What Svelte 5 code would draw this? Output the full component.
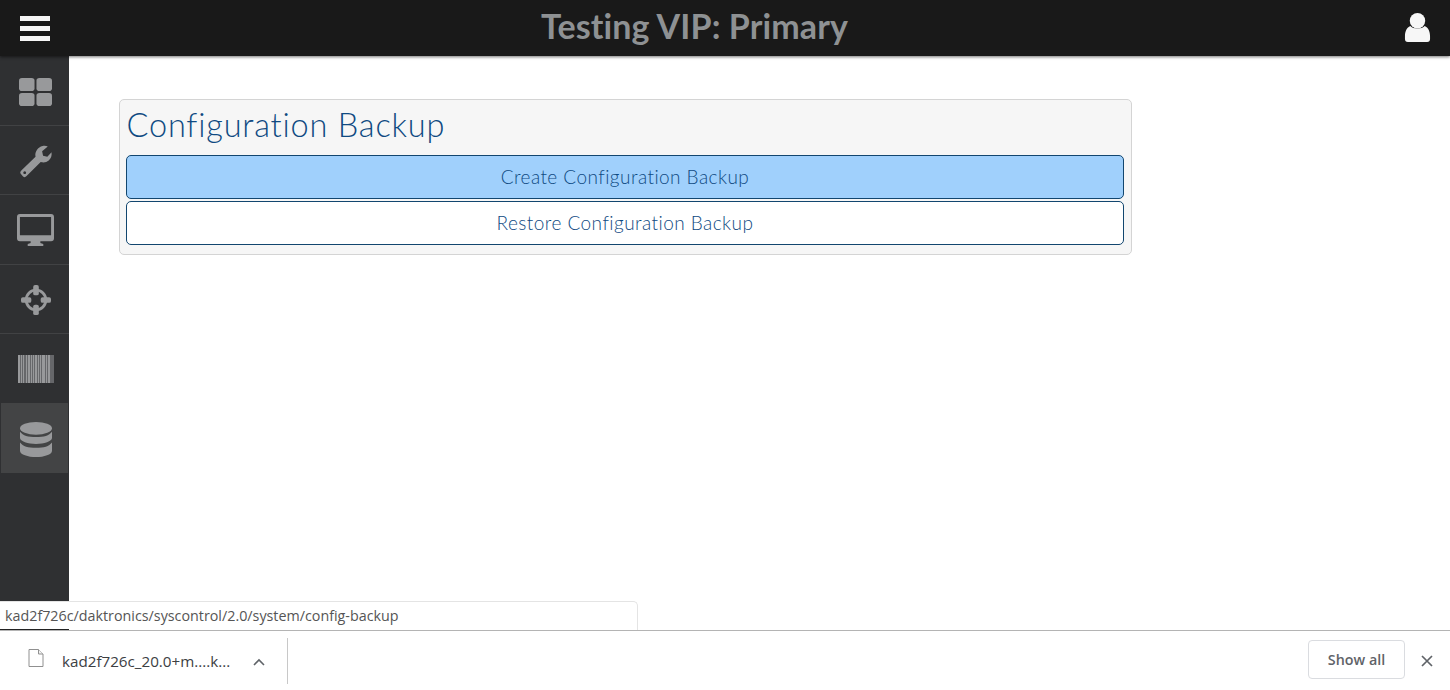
<script lang="ts">
	const navItems = [
		{ id: 'dashboard', active: false },
		{ id: 'tools', active: false },
		{ id: 'display', active: false },
		{ id: 'target', active: false },
		{ id: 'barcode', active: false },
		{ id: 'database', active: true }
	];

	// bar widths for the barcode icon, alternating bar and gap
	const barcode = [2, 1, 1, 1, 1, 2, 1, 1, 2, 1, 1, 1, 1, 1, 2, 1, 1, 1, 1, 1, 3, 1, 1, 1, 2];
	const bars = barcode.reduce((acc, w, i) => {
		const x = barcode.slice(0, i).reduce((a, b) => a + b, 0);
		if (i % 2 === 0) acc.push({ x, w });
		return acc;
	}, [] as { x: number; w: number }[]);
</script>

<div class="page">
	<header class="topbar">
		<button class="topbar__menu" type="button" aria-label="Menu">
			<span></span><span></span><span></span>
		</button>
		<h1 class="topbar__title">Testing VIP: Primary</h1>
		<svg class="topbar__user" viewBox="0 0 28 32" width="27" height="31" aria-hidden="true">
			<circle cx="14" cy="9" r="8" fill="#f7f7f7" />
			<path d="M6.5 14.5 C9 18 19 18 21.5 14.5 C25 16 27 20 27 25 L27 28 C27 30 26 31 24 31 L4 31 C2 31 1 30 1 28 L1 25 C1 20 3 16 6.5 14.5 Z" fill="#f7f7f7" />
		</svg>
	</header>

	<div class="body">
		<nav class="rail">
			{#each navItems as item}
				<button class="rail__item" class:is-active={item.active} type="button" aria-label={item.id}>
					{#if item.id === 'dashboard'}
						<svg viewBox="0 0 34 30" width="33" height="28" preserveAspectRatio="none">
							<rect x="0" y="0" width="16" height="14" rx="3" />
							<rect x="18" y="0" width="16" height="14" rx="3" />
							<rect x="0" y="16" width="16" height="14" rx="3" />
							<rect x="18" y="16" width="16" height="14" rx="3" />
						</svg>
					{:else if item.id === 'tools'}
						<svg viewBox="0 0 34 34" width="32" height="33" preserveAspectRatio="none">
							<path fill-rule="evenodd" d="M24 1 C26 0.6 28 0.8 29.5 1.5 L23.5 6.5 L24.5 11 L29 12 L33.5 7.5 C34 11 33 14 30.5 16 C28 18 25 18.5 22 17.5 L7 32 C5.5 33.5 4.5 33.5 3 32.2 L1 30 C0 28.6 0 27.5 1.4 26.2 L16.5 12 C15.5 7 19 2 24 1 Z M5 27 A1.5 1.5 0 1 0 5.01 27 Z" />
						</svg>
					{:else if item.id === 'display'}
						<svg viewBox="0 0 38 34" width="37" height="33" preserveAspectRatio="none">
							<path fill-rule="evenodd" d="M3 0 H35 C37 0 38 1 38 3 V25 C38 27 37 28 35 28 H24 V30 L27 31 V33 H11 V31 L14 30 V28 H3 C1 28 0 27 0 25 V3 C0 1 1 0 3 0 Z M3 3 V22 H35 V3 Z" />
						</svg>
					{:else if item.id === 'target'}
						<svg viewBox="0 0 32 32" width="30" height="30">
							<circle cx="16" cy="16" r="10.5" fill="none" stroke-width="3" class="rail__ring" />
							<rect x="13" y="0" width="6" height="11" rx="2" />
							<rect x="13" y="21" width="6" height="11" rx="2" />
							<rect x="0" y="13" width="11" height="6" rx="2" />
							<rect x="21" y="13" width="11" height="6" rx="2" />
						</svg>
					{:else if item.id === 'barcode'}
						<svg viewBox="0 0 36 28" width="36" height="28" preserveAspectRatio="none">
							<rect class="rail__barback" x="0" y="0" width="36" height="28" />
							{#each bars as bar}
								<rect x={bar.x} y="0" width={bar.w} height="28" />
							{/each}
						</svg>
					{:else}
						<svg viewBox="0 0 32 36" width="32" height="35" preserveAspectRatio="none">
							<ellipse cx="16" cy="6.5" rx="16" ry="6.5" />
							<path d="M0 10 C3 14 8 15.5 16 15.5 C24 15.5 29 14 32 10 V16.5 C32 20 24 22.5 16 22.5 C8 22.5 0 20 0 16.5 Z" />
							<path d="M0 21 C3 25 8 26.5 16 26.5 C24 26.5 29 25 32 21 V29.5 C32 33.5 24 36 16 36 C8 36 0 33.5 0 29.5 Z" />
						</svg>
					{/if}
				</button>
			{/each}
		</nav>

		<main class="content">
			<section class="card">
				<h2 class="card__title">Configuration Backup</h2>
				<button class="card__btn card__btn--active" type="button">Create Configuration Backup</button>
				<button class="card__btn" type="button">Restore Configuration Backup</button>
			</section>
		</main>

		<div class="status">kad2f726c/daktronics/syscontrol/2.0/system/config-backup</div>
	</div>

	<footer class="downloads">
		<div class="downloads__item">
			<svg class="downloads__file" viewBox="0 0 16 18" width="16" height="18" aria-hidden="true">
				<path d="M1 0.5 H10.5 L15 5 V17.5 H1 Z" fill="#fff" stroke="#909090" />
				<path d="M10.5 0.5 V5 H15" fill="#f2f2f2" stroke="#909090" />
			</svg>
			<span class="downloads__name">kad2f726c_20.0+m....k...</span>
			<svg class="downloads__chev" viewBox="0 0 12 8" width="12" height="8" aria-hidden="true">
				<path d="M1 7 L6 2 L11 7" fill="none" stroke="#5f6368" stroke-width="1.6" />
			</svg>
		</div>
		<button class="downloads__all" type="button">Show all</button>
		<svg class="downloads__close" viewBox="0 0 12 12" width="12" height="12" aria-hidden="true">
			<path d="M1 1 L11 11 M11 1 L1 11" fill="none" stroke="#5f6368" stroke-width="1.7" />
		</svg>
	</footer>
</div>

<style>
	:global(body) {
		margin: 0;
		background: #fff;
		overflow: hidden;
	}

	.page {
		display: flex;
		flex-direction: column;
		height: 690px;
		font-family: Lato, 'Liberation Sans', sans-serif;
		font-variant-ligatures: none;
	}

	.topbar {
		position: relative;
		z-index: 2;
		display: flex;
		align-items: center;
		justify-content: space-between;
		flex: 0 0 56px;
		box-sizing: border-box;
		padding: 0 19px 0 20px;
		background: #191919;
		box-shadow: 0 1px 3px rgba(0, 0, 0, 0.55);
	}

	.topbar__menu {
		display: flex;
		flex-direction: column;
		gap: 5px;
		width: 30px;
		padding: 0;
		border: 0;
		background: none;
	}

	.topbar__menu span {
		height: 5px;
		background: #f6f6f6;
	}

	.topbar__title {
		margin: 0 65px 4px 0;
		font-size: 34px;
		font-weight: 700;
		line-height: 50px;
		letter-spacing: 0.1px;
		color: #8e9193;
	}

	.topbar__user {
		margin: 0 0 2px;
	}

	.body {
		position: relative;
		display: flex;
		flex: 1;
		min-height: 0;
	}

	.rail {
		display: flex;
		flex-direction: column;
		flex: 0 0 69px;
		padding-top: 0.5px;
		background: #2f3032;
	}

	.rail__item {
		display: flex;
		align-items: center;
		justify-content: center;
		box-sizing: border-box;
		height: 69.4px;
		padding: 2px 0 0 2px;
		border: 0;
		border-bottom: 1px solid #414244;
		background: none;
	}

	.rail__item:nth-child(5) {
		border-bottom-color: transparent;
	}

	.rail__item.is-active {
		margin: 0 1px;
		border-bottom: 0;
		background: #434445;
	}

	.rail__item svg {
		fill: #98999b;
	}

	.rail__ring {
		fill: none;
		stroke: #98999b;
	}

	.rail__item svg .rail__barback {
		fill: #66676a;
	}

	.content {
		flex: 1;
		padding: 43px 0 0 50px;
	}

	.card {
		display: flex;
		flex-direction: column;
		gap: 2px;
		box-sizing: border-box;
		width: 1013px;
		height: 156px;
		padding: 0 7px 0 6px;
		border: 1px solid #d4d4d4;
		border-radius: 5px;
		background: #f6f6f6;
	}

	.card__title {
		margin: 0;
		height: 53px;
		padding-left: 0.5px;
		font-size: 32.5px;
		font-weight: 300;
		line-height: 50px;
		letter-spacing: 0.8px;
		color: #0f4a82;
	}

	.card__btn {
		height: 44px;
		padding: 0 0 2px;
		border: 1px solid #12466f;
		border-radius: 5px;
		background: #fff;
		font-family: inherit;
		font-size: 19px;
		font-weight: 300;
		font-variant-ligatures: none;
		letter-spacing: 0.45px;
		color: #0f4a82;
	}

	.card__btn--active {
		background: #a0d0fc;
	}

	.status {
		position: absolute;
		left: 0;
		bottom: 0;
		box-sizing: border-box;
		width: 638px;
		height: 29px;
		padding-left: 5px;
		border: 1px solid #e4e4e4;
		border-width: 1px 1px 0 0;
		border-top-right-radius: 5px;
		background: #fff;
		font-family: 'Open Sans', sans-serif;
		font-size: 14.3px;
		line-height: 28px;
		color: #555;
	}

	.status::after {
		content: '';
		position: absolute;
		left: 0;
		bottom: 0;
		width: 69px;
		height: 1px;
		background: #222;
	}

	.downloads {
		display: flex;
		align-items: center;
		flex: 0 0 60px;
		box-sizing: border-box;
		border-top: 1px solid #b4b4b4;
		background: #fff;
		font-family: 'Open Sans', sans-serif;
	}

	.downloads__item {
		display: flex;
		align-items: center;
		box-sizing: border-box;
		width: 288px;
		height: 46px;
		padding-left: 28px;
		border-right: 1px solid #c8c8c8;
	}

	.downloads__file {
		margin-top: -5px;
	}

	.downloads__name {
		margin-left: 18px;
		font-size: 15.2px;
		color: #3c4043;
		white-space: nowrap;
	}

	.downloads__chev {
		margin: 2px 0 0 23px;
	}

	.downloads__all {
		width: 97px;
		height: 39px;
		margin: -2px 0 0 auto;
		padding: 0;
		border: 1px solid #dadce0;
		border-radius: 4px;
		background: #fff;
		font-family: inherit;
		font-size: 14.3px;
		font-weight: 600;
		color: #5f6368;
	}

	.downloads__close {
		margin: 0 17px 0 16px;
	}
</style>
